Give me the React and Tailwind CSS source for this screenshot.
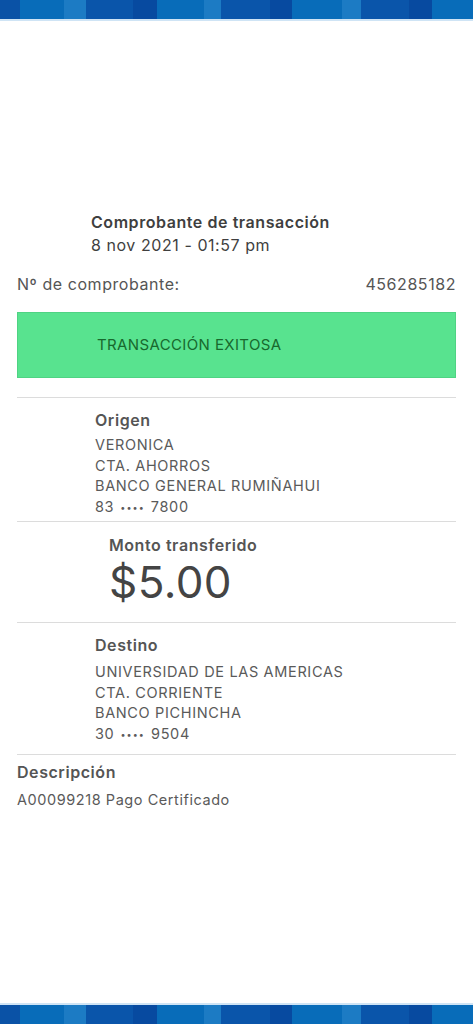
import React from "react";

const segs = [
  [20, "bg-[#0a52a6]"],
  [44, "bg-[#086cb9]"],
  [22, "bg-[#1c7bc4]"],
  [47, "bg-[#0a55aa]"],
  [24, "bg-[#074aa0]"],
  [47, "bg-[#086cb9]"],
  [17, "bg-[#1c7bc4]"],
  [49, "bg-[#0a55aa]"],
  [22, "bg-[#074aa0]"],
  [50, "bg-[#086cb9]"],
  [19, "bg-[#1c7bc4]"],
  [48, "bg-[#0a55aa]"],
  [23, "bg-[#074aa0]"],
  [41, "bg-[#086cb9]"],
];

function Bar({ top }) {
  return (
    <div className={`flex ${top ? "flex-col" : "flex-col-reverse"}`}>
      <div className="flex h-[19px] w-full">
        {segs.map(([w, c], i) => (
          <div key={i} className={`h-full shrink-0 ${c}`} style={{ width: w }} />
        ))}
      </div>
      <div className="h-[2px] bg-[#cfe4f5]" />
    </div>
  );
}

function Masked({ a, b }) {
  return (
    <div className="flex items-center">
      <span>{a}</span>
      <span className="mx-[6px] text-[9px] leading-none tracking-[0.12em]">••••</span>
      <span>{b}</span>
    </div>
  );
}

export default function App() {
  return (
    <div
      className="w-[473px] h-[1024px] bg-white flex flex-col text-[#4a4a4a] tracking-[0.035em]"
      style={{ fontFamily: "Inter, 'Noto Sans', sans-serif" }}
    >
      <Bar top />
      <div className="flex-1 flex flex-col px-[17px]">
        <div className="pt-[190px] pl-[74px]">
          <div className="text-[16px] leading-[22px] font-semibold text-[#3f3f3f]">
            Comprobante de transacción
          </div>
          <div className="mt-[1px] text-[16px] leading-[22px] text-[#3f3f3f]">8 nov 2021 - 01:57 pm</div>
        </div>
        <div className="mt-[17px] flex justify-between text-[16px] leading-[22px] text-[#555]">
          <span>Nº de comprobante:</span>
          <span>456285182</span>
        </div>
        <div className="mt-[17px] h-[66px] bg-[#58e38f] border border-[#4fd383] flex items-center pl-[79px] text-[15px] text-[#17692d] tracking-[0.025em]">
          TRANSACCIÓN EXITOSA
        </div>
        <div className="mt-[19px] border-t border-[#dcdcdc]" />
        <div className="pl-[78px] pt-[11px] pb-[3px]">
          <div className="text-[16px] leading-[22px] font-semibold text-[#555]">Origen</div>
          <div className="mt-[4px] text-[14.5px] leading-[20.7px] text-[#5a5a5a] tracking-[0.045em]">
            <div>VERONICA</div>
            <div>CTA. AHORROS</div>
            <div>BANCO GENERAL RUMIÑAHUI</div>
            <Masked a="83" b="7800" />
          </div>
        </div>
        <div className="border-t border-[#dcdcdc]" />
        <div className="pl-[92px] pt-[12px] pb-[14px]">
          <div className="text-[16px] leading-[22px] font-semibold text-[#555]">Monto transferido</div>
          <div className="text-[44px] leading-[52px] text-[#444] tracking-[0.01em]">$5.00</div>
        </div>
        <div className="border-t border-[#dcdcdc]" />
        <div className="pl-[78px] pt-[11px] pb-[9px]">
          <div className="text-[16px] leading-[22px] font-semibold text-[#555]">Destino</div>
          <div className="mt-[6px] text-[14.5px] leading-[20.7px] text-[#5a5a5a] tracking-[0.045em]">
            <div>UNIVERSIDAD DE LAS AMERICAS</div>
            <div>CTA. CORRIENTE</div>
            <div>BANCO PICHINCHA</div>
            <Masked a="30" b="9504" />
          </div>
        </div>
        <div className="border-t border-[#dcdcdc]" />
        <div className="pt-[6px]">
          <div className="text-[16px] leading-[22px] font-semibold text-[#555]">Descripción</div>
          <div className="mt-[7px] text-[14.5px] leading-[20px] text-[#5a5a5a]">A00099218 Pago Certificado</div>
        </div>
        <div className="flex-1" />
      </div>
      <Bar />
    </div>
  );
}
